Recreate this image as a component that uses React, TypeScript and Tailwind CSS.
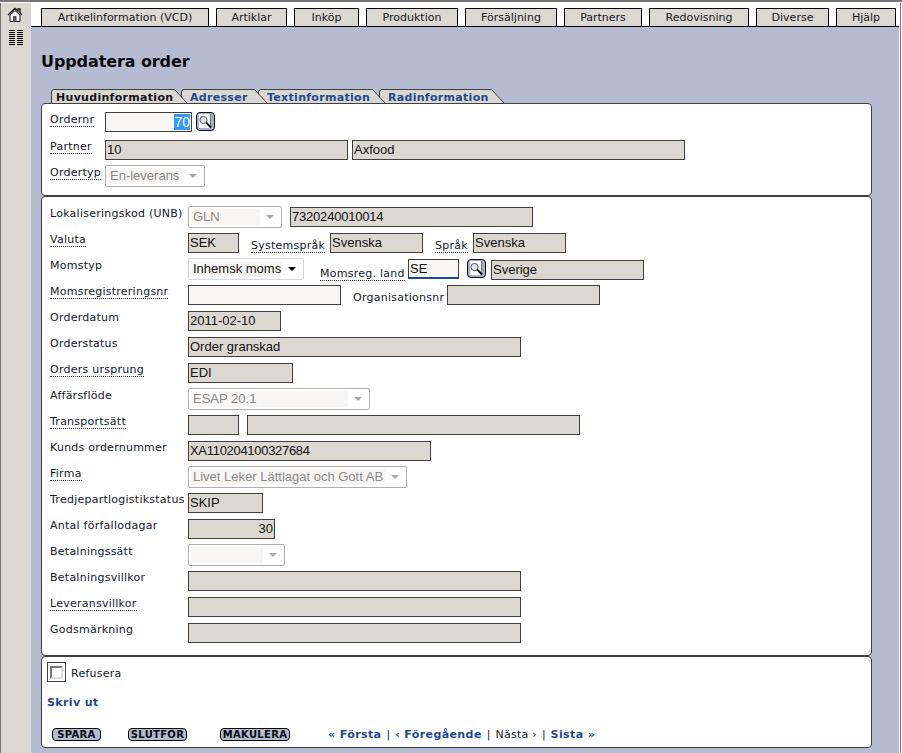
import React from "react";

const LABEL = "block text-[11px] leading-[13px] tracking-[0.25px] text-[#14181f] font-['DejaVu_Sans',Verdana,sans-serif] whitespace-nowrap";

function Lbl({ children, dotted, className = "" }: { children: React.ReactNode; dotted?: boolean; className?: string }) {
  return (
    <span className={`${LABEL} ${className}`}>
      <span className={dotted ? "border-b border-dotted border-[#333] inline-block" : "inline-block"}>{children}</span>
    </span>
  );
}

function Field({ w, children, right, light, className = "" }: { w: string; children?: React.ReactNode; right?: boolean; light?: boolean; className?: string }) {
  return (
    <div
      className={`${w} h-[20px] shrink-0 border border-[#404040] ${light ? "bg-[#f7f6f4]" : "bg-[#dbd8d2]"} px-[1px] text-[13px] leading-[18px] text-[#111] whitespace-nowrap overflow-hidden font-['Liberation_Sans',Arial,sans-serif] ${right ? "text-right" : ""} ${className}`}
    >
      {children}
    </div>
  );
}

function Sel({ w, children, active }: { w: string; children?: React.ReactNode; active?: boolean }) {
  return (
    <div
      className={`${w} h-[22px] -mt-px shrink-0 rounded-[2px] border ${active ? "border-[#d5d8e6]" : "border-[#b0b0b0]"} bg-white flex items-stretch p-[2px] text-[13px] font-['Liberation_Sans',Arial,sans-serif]`}
    >
      <div className={`flex-1 min-w-0 bg-[#f7f6f4] pl-[2px] leading-[16px] whitespace-nowrap overflow-hidden ${active ? "text-[#111]" : "text-[#8a8a8a]"}`}>
        {children}
      </div>
      <div className="w-[19px] flex items-center justify-center">
        <div className={`w-0 h-0 border-l-[4px] border-r-[4px] border-t-[4px] border-l-transparent border-r-transparent ${active ? "border-t-black" : "border-t-[#a8a8a8]"}`} />
      </div>
    </div>
  );
}

function Search({ className = "" }: { className?: string }) {
  return (
    <svg width="19" height="19" viewBox="0 0 19 19" className={`shrink-0 ${className}`}>
      <rect x="0.5" y="0.5" width="18" height="18" rx="3.5" fill="#a9afc9" stroke="#111" />
      <rect x="3" y="2" width="12" height="14" fill="#fff" />
      <rect x="14" y="2" width="1" height="14" fill="#777" />
      <circle cx="7.5" cy="8" r="3.6" fill="#dfe4ea" stroke="#555" />
      <path d="M10.2 10.6 L15 15.5" stroke="#000" strokeWidth="2" />
    </svg>
  );
}

function Row({ label, dotted, children }: { label: string; dotted?: boolean; children: React.ReactNode }) {
  return (
    <div className="flex h-[26px] items-start">
      <div className="w-[138px] shrink-0">
        <Lbl dotted={dotted}>{label}</Lbl>
      </div>
      {children}
    </div>
  );
}

function TabShape({ w, children, pl, z, ml, active }: { w: number; children: string; pl: string; z: string; ml: string; active?: boolean }) {
  return (
    <div className={`relative h-[15px] shrink-0 ${z} ${ml}`} style={{ width: w }}>
      <svg width={w} height="15" className="absolute left-0 top-0">
        <path
          d={`M0.5 15 L0.5 3 Q0.5 0.5 3 0.5 L${w - 13.5} 0.5 L${w - 0.5} 14.5`}
          fill="#dbd8d2"
          stroke="#404040"
        />
      </svg>
      <span
        className={`absolute top-[2px] ${pl} text-[11px] leading-[14px] tracking-[0.3px] font-bold font-['DejaVu_Sans',Verdana,sans-serif] whitespace-nowrap ${active ? "text-[#10131c]" : "text-[#1d4a8e]"}`}
      >
        {children}
      </span>
    </div>
  );
}

const navItems: [string, string][] = [
  ["Artikelinformation (VCD)", "w-[168px]"],
  ["Artiklar", "w-[71px]"],
  ["Inköp", "w-[65px]"],
  ["Produktion", "w-[92px]"],
  ["Försäljning", "w-[92px]"],
  ["Partners", "w-[78px]"],
  ["Redovisning", "w-[100px]"],
  ["Diverse", "w-[73px]"],
  ["Hjälp", "w-[60px]"],
];

function ActionBtn({ children, w }: { children: string; w: string }) {
  return (
    <div className={`${w} h-[13px] shrink-0 rounded-[4px] border border-black bg-[#b5bbd1] text-center text-[10px] leading-[11px] font-bold tracking-[0.3px] text-[#0a0a0a] font-['DejaVu_Sans',Verdana,sans-serif]`}>
      {children}
    </div>
  );
}

export default function App() {
  const link = "text-[#1d4a8e] font-bold tracking-[0.4px]";
  return (
    <div className="w-[902px] h-[753px] overflow-hidden flex flex-col bg-white border-t-2 border-[#777] font-['DejaVu_Sans',Verdana,sans-serif]">
      <div className="h-px bg-white shrink-0" />
      <div className="flex flex-1 min-h-0">
        <aside className="w-[31px] shrink-0 border-l border-[#777] bg-[#dbd8d2] flex flex-col items-center">
          <svg width="16" height="16" viewBox="0 0 16 16" className="mt-[4px] -ml-[2px]">
            <path d="M1 8 L8 1.5 L11 4.2 L11 2 L13 2 L13 6 L15 8" fill="none" stroke="#111" strokeWidth="1.3" />
            <path d="M3 8 L8 3.5 L13 8 L13 14.5 L3 14.5 Z" fill="#fff" stroke="#111" />
            <rect x="6" y="9" width="3.5" height="5.5" fill="#555" />
          </svg>
          <div className="mt-[7px] flex gap-[2px]">
            {[0, 1].map((c) => (
              <div key={c} className="flex flex-col gap-[1px]">
                {[0, 1, 2, 3, 4, 5, 6, 7].map((i) => (
                  <div key={i} className="w-[6px] h-px bg-black" />
                ))}
              </div>
            ))}
          </div>
        </aside>

        <div className="w-[868px] shrink-0 flex flex-col">
          <nav className="h-[24px] shrink-0 bg-white border-b border-black flex items-end pl-[10px] gap-[7px]">
            {navItems.map(([t, w]) => (
              <div
                key={t}
                className={`${w} h-[18px] shrink-0 border border-b-0 border-black bg-[#dbd8d2] text-center text-[11px] leading-[17px] text-[#14181f]`}
              >
                {t}
              </div>
            ))}
          </nav>

          <main className="flex-1 bg-[#b5bbd1] pl-[10px] pt-[25px]">
            <h1 className="text-[16px] leading-[20px] font-bold tracking-[-0.1px] text-[#0a0a0a] mb-[17px]">Uppdatera order</h1>

            <div className="flex pl-[10px] -mb-px relative z-10">
              <TabShape w={137} pl="left-[5px]" z="z-40" ml="" active>Huvudinformation</TabShape>
              <TabShape w={87} pl="left-[9px]" z="z-30" ml="-ml-[7px]">Adresser</TabShape>
              <TabShape w={128} pl="left-[9px]" z="z-20" ml="-ml-[10px]">Textinformation</TabShape>
              <TabShape w={126} pl="left-[9px]" z="z-10" ml="-ml-[7px]">Radinformation</TabShape>
            </div>

            <div className="relative z-20 w-[831px]">
              <section className="h-[93px] rounded-[4px] border border-[#404040] bg-white pl-[8px] pt-[8px]">
                <div className="flex h-[28px] items-start">
                  <div className="w-[55px] shrink-0 pt-px"><Lbl dotted>Ordernr</Lbl></div>
                  <Field w="w-[87px]" light className="text-right text-[14px]">
                    <span className="bg-[#3399ff] text-white">70</span>
                  </Field>
                  <Search className="ml-[4px]" />
                </div>
                <div className="flex h-[26px] items-start">
                  <div className="w-[55px] shrink-0"><Lbl dotted>Partner</Lbl></div>
                  <Field w="w-[243px]">10</Field>
                  <Field w="w-[333px]" className="ml-[4px]">Axfood</Field>
                </div>
                <div className="flex items-start">
                  <div className="w-[55px] shrink-0"><Lbl dotted>Ordertyp</Lbl></div>
                  <Sel w="w-[100px]">En-leverans</Sel>
                </div>
              </section>

              <section className="rounded-[4px] border border-[#404040] bg-white pl-[8px] pt-[10px] pb-[6px]">
                <Row label="Lokaliseringskod (UNB)">
                  <Sel w="w-[94px]">GLN</Sel>
                  <Field w="w-[243px]" className="ml-[8px] tracking-[-0.2px]">7320240010014</Field>
                </Row>
                <Row label="Valuta" dotted>
                  <Field w="w-[51px]">SEK</Field>
                  <Lbl dotted className="ml-[12px] w-[79px] mt-[6px]">Systemspråk</Lbl>
                  <Field w="w-[93px]">Svenska</Field>
                  <Lbl dotted className="ml-[12px] w-[38px] mt-[6px]">Språk</Lbl>
                  <Field w="w-[93px]">Svenska</Field>
                </Row>
                <Row label="Momstyp">
                  <Sel w="w-[116px]" active>Inhemsk moms</Sel>
                  <Lbl dotted className="ml-[16px] w-[88px] mt-[8px]">Momsreg. land</Lbl>
                  <Field w="w-[51px]" light className="border-b-[#1d4a8e] border-b-2 leading-[17px]">SE</Field>
                  <Search className="ml-[8px]" />
                  <Field w="w-[153px]" className="ml-[5px] mt-px">Sverige</Field>
                </Row>
                <Row label="Momsregistreringsnr" dotted>
                  <Field w="w-[153px]" light />
                  <Lbl className="ml-[12px] w-[94px] mt-[6px]">Organisationsnr</Lbl>
                  <Field w="w-[153px]" />
                </Row>
                <Row label="Orderdatum"><Field w="w-[93px]">2011-02-10</Field></Row>
                <Row label="Orderstatus"><Field w="w-[333px]">Order granskad</Field></Row>
                <Row label="Orders ursprung" dotted><Field w="w-[105px]">EDI</Field></Row>
                <Row label="Affärsflöde"><Sel w="w-[182px]">ESAP 20.1</Sel></Row>
                <Row label="Transportsätt" dotted>
                  <Field w="w-[51px]" />
                  <Field w="w-[333px]" className="ml-[8px]" />
                </Row>
                <Row label="Kunds ordernummer"><Field w="w-[243px]" className="tracking-[-0.3px]">XA110204100327684</Field></Row>
                <Row label="Firma" dotted><Sel w="w-[219px]">Livet Leker Lättlagat och Gott AB</Sel></Row>
                <Row label="Tredjepartlogistikstatus"><Field w="w-[75px]">SKIP</Field></Row>
                <Row label="Antal förfallodagar"><Field w="w-[87px]" right>30</Field></Row>
                <Row label="Betalningssätt"><Sel w="w-[97px]" /></Row>
                <Row label="Betalningsvillkor"><Field w="w-[333px]" /></Row>
                <Row label="Leveransvillkor" dotted><Field w="w-[333px]" /></Row>
                <Row label="Godsmärkning"><Field w="w-[333px]" /></Row>
              </section>

              <section className="h-[92px] rounded-[4px] border border-[#404040] bg-white pl-[5px] pt-[5px]">
                <div className="flex items-center h-[20px]">
                  <div className="w-[19px] h-[20px] border border-[#404040] bg-white flex items-center justify-center">
                    <div className="w-[13px] h-[13px] border-2 border-t-[#777] border-l-[#777] border-b-[#ddd] border-r-[#ddd]" />
                  </div>
                  <Lbl className="ml-[5px] pt-[3px]">Refusera</Lbl>
                </div>
                <div className={`mt-[14px] text-[11px] leading-[13px] ${link}`}>Skriv ut</div>
                <div className="mt-[19px] flex items-center pl-[5px] text-[11px] leading-[13px] whitespace-nowrap">
                  <ActionBtn w="w-[49px]">SPARA</ActionBtn>
                  <div className="w-[27px]" />
                  <ActionBtn w="w-[59px]">SLUTFÖR</ActionBtn>
                  <div className="w-[33px]" />
                  <ActionBtn w="w-[70px]">MAKULERA</ActionBtn>
                  <div className="w-[38px]" />
                  <span className={link}>« Första</span>
                  <span className="text-[#14181f] mx-[5px]">|</span>
                  <span className={link}>‹ Föregående</span>
                  <span className="text-[#14181f] mx-[5px]">|</span>
                  <span className="text-[#14181f] tracking-[0.25px]">Nästa ›</span>
                  <span className="text-[#14181f] mx-[5px]">|</span>
                  <span className={link}>Sista »</span>
                </div>
              </section>
            </div>
          </main>
        </div>

        <div className="w-[2px] shrink-0 border-r border-[#777] bg-white" />
      </div>
    </div>
  );
}
